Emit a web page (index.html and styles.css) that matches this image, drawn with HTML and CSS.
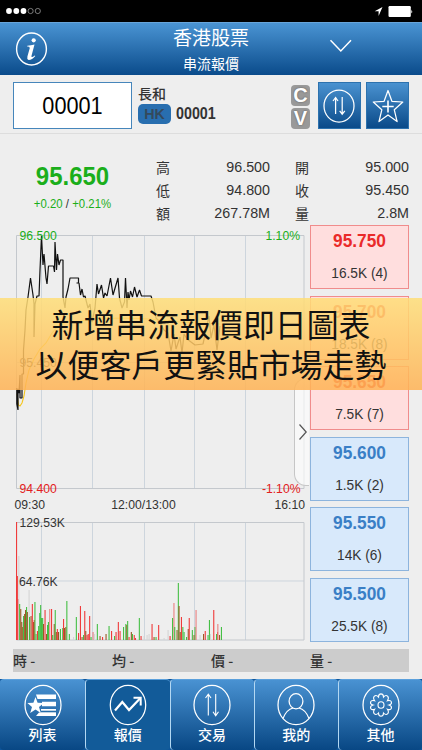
FILE: index.html
```html
<!DOCTYPE html>
<html lang="zh-Hant">
<head>
<meta charset="utf-8">
<title>香港股票</title>
<link rel="stylesheet" href="styles.css">
</head>
<body>
<div class="phone">
  <div class="status">
    <svg width="44" height="10" viewBox="0 0 44 10"><g fill="#fff"><circle cx="4" cy="5" r="2.9"/><circle cx="11.3" cy="5" r="2.9"/><circle cx="18.5" cy="5" r="2.9"/></g><g fill="none" stroke="#aaa" stroke-width=".7"><circle cx="25.6" cy="5" r="2.6"/><circle cx="32.8" cy="5" r="2.6"/></g></svg>
    <svg width="40" height="14" viewBox="0 0 40 14"><path d="M8.5 3L.7 7.3H4.6V12.1Z" fill="#fff"/><rect x="14.5" y="2.1" width="22.3" height="10.8" rx="1.2" fill="#fff"/><path d="M37.3 5.6Q39 7.6 37.3 9.6Z" fill="#fff"/></svg>
  </div>
  <header class="header">
    <svg class="info" width="34" height="36" viewBox="0 0 34 36"><ellipse cx="17.5" cy="18" rx="14.9" ry="16" fill="none" stroke="#fff" stroke-width="1.4"/><circle cx="19.7" cy="9.3" r="2.1" fill="#fff"/><path d="M13.3 14.8Q17 14.4 20.5 13.4L17.4 25.2Q17.4 27 20.7 24.4L21.3 25Q18 29 14.6 28.9Q12.7 28.2 13.4 25.6L15.8 17Q15.8 15.6 13.2 15.6Z" fill="#fff"/></svg>
    <div class="titles"><div class="title">香港股票</div><div class="subtitle">串流報價</div></div>
    <svg class="chevron" width="24" height="16" viewBox="0 0 24 16"><path d="M1.5 2.2L11.8 13L22 2.2" fill="none" stroke="#fff" stroke-width="1.5"/></svg>
  </header>
  <section class="symbol">
    <div class="code"><div class="tall">00001</div></div>
    <div class="name"><div class="cn">長和</div><div class="market"><span class="hk">HK</span><span class="tall">00001</span></div></div>
    <div class="cv"><span>C</span><span>V</span></div>
    <div class="btn"><svg width="34" height="36" viewBox="0 0 34 36"><ellipse cx="17" cy="18" rx="15" ry="16" class="line"/><path d="M13.6 26V9.8M11 13L13.6 9.5L16 13M20.2 9V26M17.7 22.8L20.2 26.3L22.8 22.8" class="line"/></svg></div>
    <div class="btn"><svg width="34" height="36" viewBox="0 0 34 36"><path d="M17 2.5L20.9 13.3L31.8 14L23.3 21.8L26.1 33.6L17 27L8 33.6L10.8 21.8L2.3 14L13.1 13.3Z" class="line star"/><path d="M17 12.6V24.4M11.3 18.5H22.7" class="line plus"/></svg></div>
  </section>
  <section class="summary">
    <div class="last"><div class="price tall">95.650</div><div class="change">+0.20 <i>/</i> +0.21%</div></div>
    <div class="stats">
      <span>高</span><b>96.500</b><span class="second">開</span><b>95.000</b>
      <span>低</span><b>94.800</b><span class="second">收</span><b>95.450</b>
      <span>額</span><b>267.78M</b><span class="second">量</span><b>2.8M</b>
    </div>
  </section>
  <main class="market-data">
    <svg class="chart" width="310" height="424" viewBox="0 225 310 424">
      <g class="grid">
        <path d="M41.5 235.5V488.5M92.5 235.5V488.5M144.5 235.5V488.5M194.5 235.5V488.5M245.5 235.5V488.5M16.5 362.5H304M41.5 522.5V640M92.5 522.5V640M144.5 522.5V640M194.5 522.5V640M245.5 522.5V640M16.5 581H304"/>
        <path class="frame" d="M16.5 235.5H304V488.5H16.5ZM16.5 522.5H304V640H16.5Z"/>
      </g>
      <path class="average" d="M17 394L18.5 405L20 406L22 403L24 396L26 383L29 370L34 359L40 349L46 343L52 333L58 326L66 322L80 321L95 319L120 318L150 319L180 322L220 324"/>
      <path class="trend" d="M16.8 388V404L18 410V389L19 393L20 375V398H22V374H23.5V350L25 330L26 310L28 297L30.5 278L33 295L34 304V337L35 304L37 296H39L40 270L41.5 236L43 265L44 254L46 278L47 284L48.5 266H53.5L54.5 272L55 242L56.5 270L57.5 254L59 265L60.5 260H63V297L65 308L66 297L68 289L70 278H78.5V283H76.5H79L80.5 295L82 289L83.5 297L85 296L88 308L90 304L92 322L95 308L97 284L98.5 294L101.5 285L103.5 298L105 293L107 296L110.5 278L113 295L118 278L119.5 298L122 308L124.5 302L125.5 278L127 308L128 292L129 300L130.5 291L132.5 297L134.5 287L137 297L139.5 290L141.5 296H151L153 302L156 318L159 321L164 330L168 333L171 351L174 334L176 349L180 337L182 353L184 334L187 339L195 345L203 344L209 316L211 338L214 325L217 350L220 326"/>
      <g id="bars"></g>
      <g class="labels">
        <text x="19.5" y="240.2" class="up">96.500</text><text x="300" y="240.2" class="up end">1.10%</text>
        <text x="19.5" y="366.5">95.450</text>
        <text x="19.5" y="492.8" class="down">94.400</text><text x="300.5" y="492.8" class="down end">-1.10%</text>
        <text x="14.5" y="509">09:30</text><text x="143.5" y="509" class="mid">12:00/13:00</text><text x="305" y="509" class="end">16:10</text>
        <text x="19.5" y="527.2">129.53K</text><text x="19" y="585.5">64.76K</text>
      </g>
    </svg>
    <div class="depth">
      <div class="quote ask"><b>95.750</b><span>16.5K (4)</span></div>
      <div class="quote ask"><b>95.700</b><span>18.5K (8)</span></div>
      <div class="quote ask"><b>95.650</b><span>7.5K (7)</span></div>
      <div class="quote bid"><b>95.600</b><span>1.5K (2)</span></div>
      <div class="quote bid"><b>95.550</b><span>14K (6)</span></div>
      <div class="quote bid"><b>95.500</b><span>25.5K (8)</span></div>
    </div>
    <div class="drawer"><svg width="12" height="20" viewBox="0 0 12 20"><path d="M2.5 2.5L9.2 10L2.5 17.5" fill="none" stroke="#555" stroke-width="1.2"/></svg></div>
  </main>
  <div class="readout"><span>時 -</span><span>均 -</span><span>價 -</span><span>量 -</span></div>
  <nav class="tabs">
    <div class="tab"><svg width="38" height="42" viewBox="0 0 38 42"><ellipse cx="19" cy="21" rx="18" ry="19.6" class="line"/><path d="M12 10.5H32V15H13.5ZM18 17.8H32V22.3H18ZM17 25H32V32H12L15 28.5H17Z" fill="#fff"/><path d="M11.5 13L13.6 18.7L19.8 19L15 23L16.8 29L11.5 25.5L6.2 29L8 23L3.4 19L9.4 18.7Z" fill="#fff"/><path d="M17 27.5H32" stroke="#256ca9" stroke-width="1.6"/></svg><span>列表</span></div>
    <div class="tab active"><svg width="38" height="42" viewBox="0 0 38 42"><ellipse cx="19" cy="21" rx="17.7" ry="19.6" class="line"/><path d="M6 26.5L13.3 18L20 26L31 14.5" fill="none" stroke="#fff" stroke-width="2.2"/><path d="M24.5 13.8H31.7V21.5" fill="none" stroke="#fff" stroke-width="2"/></svg><span>報價</span></div>
    <div class="tab"><svg width="38" height="42" viewBox="0 0 38 42"><ellipse cx="19" cy="21" rx="18" ry="19.6" class="line"/><path d="M15.3 31.5V10.4M12.5 14L15.3 10.2L18 14M22.7 10V31.5M20 27.8L22.7 31.7L25.5 27.8" class="line thin"/></svg><span>交易</span></div>
    <div class="tab"><svg width="38" height="42" viewBox="0 0 38 42"><ellipse cx="19" cy="21" rx="18" ry="19.6" class="line"/><ellipse cx="19" cy="17.3" rx="6.9" ry="7.6" class="line"/><path d="M6 34.5C8.5 28 12.5 24.8 16 24M32 34.5C29.5 28 25.5 24.8 22 24" class="line"/></svg><span>我的</span></div>
    <div class="tab"><svg width="38" height="42" viewBox="0 0 38 42"><ellipse cx="19" cy="21" rx="18" ry="19.6" class="line"/><path d="M16.5 13C16.5 8.8 21.5 8.8 21.5 13C24.5 9.8 28 12.8 25.4 16.8C30.3 15.5 30.7 20 27 21C30.7 22 30.3 27 25.4 25.3C28 29.3 24.5 32.3 21.5 29C21.5 33.3 16.5 33.3 16.5 29C13.5 32.3 10 29.3 12.6 25.3C7.7 27 7.3 22 11 21C7.3 20 7.7 15.5 12.6 16.8C10 12.8 13.5 9.8 16.5 13Z" class="line thin"/><ellipse cx="19" cy="21" rx="3" ry="3.3" class="line thin"/></svg><span>其他</span></div>
  </nav>
  <div class="banner"><div>新增串流報價即日圖表</div><div>以便客戶更緊貼市場走勢</div></div>
</div>
<script src="chart.js"></script>
</body>
</html>
```
FILE: styles.css
```css
* { box-sizing: border-box; }
body { margin: 0; background: #eee; color: #333; font-family: "Liberation Sans", "Noto Sans CJK TC", sans-serif; }
svg { display: block; flex: none; }
.phone { position: relative; width: 422px; height: 750px; overflow: hidden; background: #eee; }
.status { height: 22px; padding: 0 8px 0 5px; background: #000; display: flex; align-items: center; justify-content: space-between; }
.header { height: 53px; padding-left: 14px; display: flex; align-items: center; background: linear-gradient(#4a94d3, #0a4b8b); border-top: 1px solid #68a5da; color: #fff; }
.titles { width: 196px; margin-left: 65px; text-align: center; font-family: "Noto Sans CJK TC", sans-serif; }
.title { font-size: 19px; line-height: 28px; }
.subtitle { font-size: 14px; line-height: 25px; }
.chevron { margin: -6px 0 0 20px; }
.tall { transform: scaleY(1.1); }
.symbol { height: 59px; padding: 7px 13px 0; display: flex; border-bottom: 1px solid #ddd; }
.code { width: 119px; height: 47px; background: #fff; border: 1px solid #4686bb; color: #000; font-size: 21.7px; line-height: 46px; text-align: center; }
.name { width: 159px; padding-left: 6px; }
.cn { font: 500 14px/22px "Noto Sans CJK TC", sans-serif; }
.market { display: flex; align-items: center; gap: 5px; font-size: 14.3px; font-weight: bold; }
.hk { width: 33px; height: 20px; border-radius: 5px; background: #286eaf; color: #34495c; text-align: center; line-height: 21px; }
.cv { width: 19px; margin-right: 7.5px; padding-top: 3px; display: flex; flex-direction: column; gap: 1.5px; }
.cv span { height: 21px; border-radius: 4px; background: #999; color: #fff; font-weight: bold; font-size: 20px; line-height: 21px; text-align: center; text-shadow: 0 0 2px #555; }
.btn { width: 43px; height: 47px; margin-right: 5.5px; flex: none; display: flex; align-items: center; justify-content: center; background: linear-gradient(#4a92d0, #0a4a89); border: 1px solid #2d72ae; }
.btn:last-child { margin-right: 0; }
.line { fill: none; stroke: #fff; stroke-width: 1.25; }
.star { stroke-linejoin: round; }
.plus { stroke-width: 1.6; }
.thin { stroke-width: 1.1; }
.summary { height: 91px; padding: 22px 13px 0; display: flex; }
.last { width: 119px; padding-top: 5px; text-align: center; color: #1bae1b; }
.price { font-size: 24px; line-height: 30px; font-weight: bold; }
.change { font-size: 11.4px; line-height: 26px; transform: scaleY(1.05); }
.change i { color: #333; font-style: normal; }
.stats { margin-left: 24px; display: grid; grid-template-columns: 30px 84px 55px 84px; grid-auto-rows: 23px; line-height: 23px; font-size: 14.3px; }
.stats span { font-family: "Noto Sans CJK TC", sans-serif; font-size: 14px; }
.stats b { font-weight: normal; text-align: right; transform: scaleY(1.06); }
.second { padding-left: 25px; }
.market-data { position: relative; height: 424px; display: flex; }
.depth { display: flex; flex-direction: column; gap: 6.6px; }
.quote { width: 99px; height: 64px; padding-top: 4px; text-align: center; border: 1px solid; }
.quote b { display: block; font-size: 17.3px; line-height: 22px; transform: scaleY(1.08); }
.quote span { display: block; margin-top: 11px; font-size: 13.7px; line-height: 22px; transform: scaleY(1.1); }
.ask { background: #ffdede; border-color: #f08c8c; }
.ask b { color: #ea2a2a; }
.bid { background: #d8e9fb; border-color: #8db4dd; }
.bid b { color: #3a7fc6; }
.grid path { fill: none; stroke: #cdd5dd; stroke-width: 1; }
.grid .frame { stroke: #c4c8cd; }
.average { fill: none; stroke: #f5c518; stroke-width: 1.1; }
.trend { fill: none; stroke: #111; stroke-width: 1.2; stroke-linejoin: bevel; }
.labels { font-size: 12.2px; fill: #333; }
.labels .up { fill: #1bae1b; }
.labels .down { fill: #e32020; }
.end { text-anchor: end; }
.mid { text-anchor: middle; }
.drawer { position: absolute; left: 294px; top: 153px; width: 15px; height: 108px; display: flex; align-items: center; padding-left: 2px; background: rgba(255,255,255,.6); border: 1px solid #c6c6c6; border-right: 0; border-radius: 12px 0 0 12px; }
.readout { height: 23px; margin: 0 13px; display: grid; grid-template-columns: repeat(4, 1fr); background: #ccc; font: 500 14px/22px "Noto Sans CJK TC", sans-serif; }
.tabs { height: 71px; margin-top: 7px; display: grid; grid-template-columns: 85px 84.5px 84px 84.5px 84px; background: #0d559a; }
.tab { display: flex; flex-direction: column; align-items: center; padding-top: 4px; background: linear-gradient(#4992d2, #084784); border-top: 1px solid #5ba0dc; border-left: 1px solid #b3d8f3; border-radius: 4px; color: #fff; font: 500 14px/17px "Noto Sans CJK TC", sans-serif; }
.tab:first-child { border-left: 0; }
.tab.active { background: #125b99; }
.banner { position: absolute; left: 0; top: 298px; width: 422px; height: 92px; padding-top: 4.5px; text-align: center; color: #111; font: 31.9px/40px "Noto Sans CJK TC", sans-serif; background: linear-gradient(rgba(255,222,120,.85), rgba(255,178,84,.85)); }
```
FILE: chart.js
```js
// Each bar: x, top y, colour key (r = down, g = up, m = mixed, p = faint red, n = neutral)
const bars = [
  [16.5,522,'r'],[17.3,576,'r'],[18.2,599,'r'],[18.8,556,'n'],[19.6,604,'g'],[20.7,609,'m'],[21.7,622,'m'],[22.7,627,'m'],
  [23.5,616,'g'],[24.6,614,'m'],[25.5,610,'m'],[26.5,607,'g'],[27.3,612,'m'],[29,590,'n'],[29.5,617,'g'],[31,616,'m'],
  [32.3,604,'r'],[33.5,622,'m'],[34.2,620,'r'],[34.9,602,'g'],[36,634,'g'],[37.4,631,'r'],[38.6,626,'g'],[39.7,613,'g'],
  [40.6,605,'g'],[41.5,618,'g'],[42.6,618,'g'],[43.5,624,'m'],[45,610,'r'],[46.5,634,'m'],[47.5,625,'g'],[48.4,622,'g'],
  [49.7,609,'p'],[51.5,609,'r'],[52.6,635,'g'],[54.2,624,'m'],[55.2,610,'g'],[56.3,632,'m'],[57.3,629,'r'],[58.5,632,'m'],
  [60.4,629,'g'],[62.7,628,'g'],[63.5,619,'r'],[64.5,628,'m'],[65.8,627,'m'],[66.8,601,'g'],[69.3,634,'g'],[73.5,637,'n'],
  [76.3,617,'g'],[78.5,633,'r'],[80.4,606,'r'],[82,637,'m'],[83.5,635,'g'],[84.7,611,'r'],[85.7,631,'m'],[87,635,'r'],
  [88.2,634,'r'],[89.6,616,'r'],[91,637,'g'],[93,632,'p'],[94.5,634,'n'],[97.3,624,'g'],[100,636,'m'],[102.5,637,'r'],
  [106,634,'m'],[109,626,'g'],[111.5,631,'r'],[114.5,636,'g'],[116,632,'r'],[118.3,622,'r'],[120,631,'r'],[123.5,627,'g'],
  [125.8,624,'g'],[126.8,625,'m'],[127.6,621,'g'],[129,637,'r'],[131.3,632,'m'],[132.4,634,'g'],[134.2,635,'r'],[135.4,638,'r'],
  [139.3,618,'g'],[141,636,'r'],[144,636,'n'],[147,635,'n'],[149,634,'n'],[152,624,'r'],[154,637,'m'],[156,637,'g'],
  [158.6,625,'r'],[164,638,'n'],[168,630,'n'],[170,636,'r'],[172.5,618,'g'],[173.9,603,'p'],[174.7,627,'g'],[177,630,'m'],
  [178.3,583,'g'],[179,606,'m'],[180.2,632,'m'],[181.4,617,'r'],[182.8,627,'g'],[184,632,'g'],[186.5,637,'g'],[188.2,629,'m'],
  [189.2,618,'r'],[192.3,630,'g'],[194,635,'m'],[195,627,'g'],[196,610,'p'],[200,635,'n'],[203.5,634,'m'],[205.2,631,'r'],
  [208,635,'g'],[209.4,620,'g'],[210.4,634,'n'],[213.7,610,'r'],[216.5,634,'g'],[217.5,632,'r'],[217.8,624,'p'],[219.5,635,'m'],[221.4,627,'g']
];
const colours = { r: '#ef3b3b', g: '#45bf45', m: '#9a5a25', p: '#ea8080', n: '#d5d5d5' };
document.getElementById('bars').innerHTML = bars.map(([x, y, c]) =>
  `<rect x="${x - .5}" y="${y}" width="1.1" height="${640 - y}" fill="${colours[c]}"/>`).join('');
```
